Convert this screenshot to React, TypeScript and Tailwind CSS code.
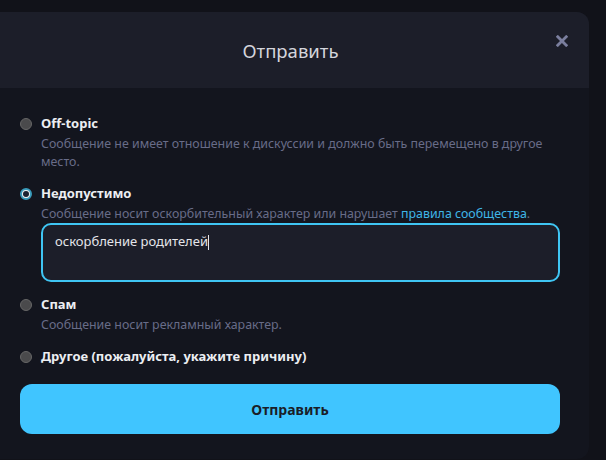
import React from 'react';

const options = [
  {
    id: 'offtopic',
    label: 'Off-topic',
    desc: 'Сообщение не имеет отношение к дискуссии и должно быть перемещено в другое место.',
  },
  {
    id: 'inappropriate',
    label: 'Недопустимо',
    desc: 'Сообщение носит оскорбительный характер или нарушает ',
    link: 'правила сообщества',
  },
  { id: 'spam', label: 'Спам', desc: 'Сообщение носит рекламный характер.' },
  { id: 'other', label: 'Другое (пожалуйста, укажите причину)' },
];

const Radio: React.FC<{ checked: boolean }> = ({ checked }) =>
  checked ? (
    <span className="mt-[4px] w-[12px] h-[12px] rounded-full border-[2px] border-[#3a9cbc] bg-[#f0f0f0] flex items-center justify-center flex-shrink-0">
      <span className="w-[6px] h-[6px] rounded-full bg-[#1b2230]" />
    </span>
  ) : (
    <span className="mt-[4px] w-[12px] h-[12px] rounded-full border border-[#666] bg-[#4a4a4c] flex-shrink-0" />
  );

export default function App() {
  const selected = 'inappropriate';

  return (
    <div
      className="w-[606px] h-[460px] bg-[#111219] pt-[12px] overflow-hidden"
      style={{ fontFamily: '"Noto Sans", "Open Sans", sans-serif' }}
    >
      <div className="w-[589px] h-[447px] bg-[#13151e] rounded-r-xl overflow-hidden flex flex-col">
        {/* Header */}
        <div className="relative h-[76px] bg-[#1c1e29] flex items-center justify-center flex-shrink-0">
          <span className="text-[18.5px] text-[#d4d5dc] pr-[8px] pt-[2px]">Отправить</span>
          <button className="absolute right-[21px] top-[23px] text-[#7b7f9e]">
            <svg width="12" height="12" viewBox="0 0 12 12">
              <path d="M1.8 1.8 L10.2 10.2 M10.2 1.8 L1.8 10.2" stroke="currentColor" strokeWidth="2.8" strokeLinecap="square" />
            </svg>
          </button>
        </div>

        {/* Options */}
        <div className="flex-1 pl-[20px] pr-[29px] pt-[26px]">
          {options.map((o) => (
            <div key={o.id} className="flex gap-[9px] mb-[13px]">
              <Radio checked={o.id === selected} />
              <div className="flex-1">
                <div className="text-[13px] font-bold text-[#eceef2] leading-[19px]">{o.label}</div>
                {o.desc && (
                  <div className="text-[12.4px] text-[#686c88] leading-[18px] mt-[2px]">
                    {o.desc}
                    {o.link && (
                      <>
                        <span className="text-[#3fb5e6]">{o.link}</span>.
                      </>
                    )}
                  </div>
                )}
                {o.id === selected && (
                  <div className="mt-[0px] h-[59px] rounded-[10px] border-2 border-[#3fc5f3] bg-[#1c1e29] px-[12px] py-[7px] text-[13px] text-[#e4e5ea]">
                    оскорбление родителей
                    <span className="inline-block w-[1px] h-[15px] bg-[#e4e5ea] align-middle" />
                  </div>
                )}
              </div>
            </div>
          ))}

          <button className="mt-[5px] w-[540px] h-[50px] rounded-[12px] bg-[#40c5ff] text-[14px] font-bold text-[#1a1d27]">
            Отправить
          </button>
        </div>
      </div>
    </div>
  );
}
